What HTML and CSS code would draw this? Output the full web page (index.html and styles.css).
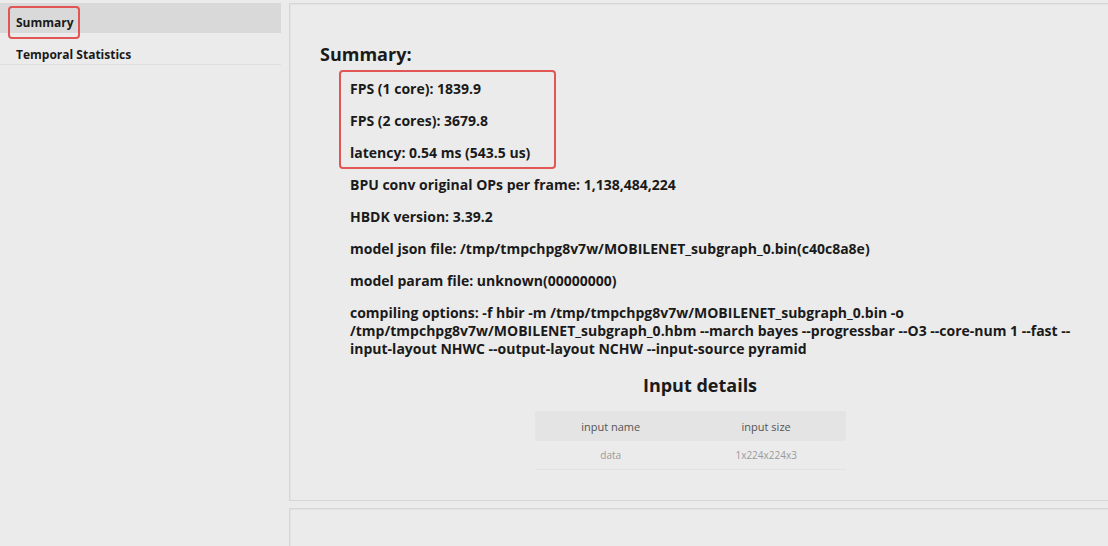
FILE: index.html
```html
<!DOCTYPE html>
<html>
<head>
<meta charset="utf-8">
<link rel="stylesheet" href="styles.css">
</head>
<body>
<div class="page">
  <nav class="sidebar">
    <div class="nav-item active"><span class="mark">Summary</span></div>
    <div class="nav-item">Temporal Statistics</div>
  </nav>
  <div class="main">
    <section class="panel">
      <h2 class="title">Summary:</h2>
      <div class="facts">
        <div class="highlight">
          <p>FPS (1 core): 1839.9</p>
          <p>FPS (2 cores): 3679.8</p>
          <p>latency: 0.54 ms (543.5 us)</p>
        </div>
        <p>BPU conv original OPs per frame: 1,138,484,224</p>
        <p>HBDK version: 3.39.2</p>
        <p>model json file: /tmp/tmpchpg8v7w/MOBILENET_subgraph_0.bin(c40c8a8e)</p>
        <p>model param file: unknown(00000000)</p>
        <p class="wrap">compiling options: -f hbir -m /tmp/tmpchpg8v7w/MOBILENET_subgraph_0.bin -o /tmp/tmpchpg8v7w/MOBILENET_subgraph_0.hbm --march bayes --progressbar --O3 --core-num 1 --fast --input-layout NHWC --output-layout NCHW --input-source pyramid</p>
      </div>
      <h2 class="subtitle">Input details</h2>
      <table class="table">
        <thead><tr><th>input name</th><th>input size</th></tr></thead>
        <tbody><tr><td>data</td><td>1x224x224x3</td></tr></tbody>
      </table>
    </section>
    <section class="panel panel-empty"></section>
  </div>
</div>
</body>
</html>
```
FILE: styles.css
```css
html, body {
  margin: 0;
  padding: 0;
  background: #ebebeb;
  overflow: hidden;
  height: 100%;
}
body {
  font-family: "Open Sans", "Noto Sans", sans-serif;
  color: #1a1a1a;
}
.page {
  display: flex;
  gap: 8px;
  padding-top: 3px;
  width: 1120px;
}
.sidebar {
  width: 281px;
  flex: none;
}
.nav-item {
  height: 30px;
  box-sizing: border-box;
  display: flex;
  align-items: flex-start;
  padding: 12px 0 0 16px;
  font-size: 12px;
  line-height: 16px;
  font-weight: 700;
  border-bottom: 1px solid #dedede;
}
.nav-item.active {
  background: #d9d9d9;
  border-bottom: none;
}
.nav-item + .nav-item {
  height: 32px;
  padding-top: 14px;
}
.mark {
  position: relative;
}
.mark::after {
  content: "";
  position: absolute;
  left: -8px;
  top: -9px;
  width: 68px;
  height: 29px;
  border: 2px solid #e25555;
  border-radius: 4px;
}
.main {
  display: flex;
  flex-direction: column;
  gap: 7px;
  width: 821px;
  flex: none;
}
.panel {
  border: 1px solid #d6d6d6;
  border-right: none;
  box-shadow: inset 1px 1px 0 #e2e2e2;
  padding: 37px 30px 30px 30px;
}
.panel-empty {
  height: 40px;
  padding: 0;
}
.title {
  margin: 0 0 3px;
  font-size: 18px;
  font-weight: 700;
  line-height: 26px;
}
.facts {
  padding-left: 30px;
}
.facts p {
  margin: 0 0 14px;
  font-size: 14px;
  font-weight: 700;
  line-height: 18px;
}
.highlight {
  margin-left: -11px;
  padding: 8px 10px 0 9px;
  width: 194px;
  border: 2px solid #e25555;
  border-radius: 4px;
  margin-bottom: 7px;
}
.highlight p:last-child {
  margin-bottom: 5px;
}
.facts p.wrap {
  margin-bottom: 0;
  width: 745px;
}
.subtitle {
  text-align: center;
  margin: 14px 0 13px;
  font-size: 18px;
  font-weight: 700;
  line-height: 26px;
}
.table {
  margin: 0 auto;
  border-collapse: collapse;
  width: 311px;
  font-size: 11px;
  transform: translateX(-10px);
}
.table th {
  background: #e4e4e4;
  font-weight: 400;
  color: #555;
  height: 30px;
  padding: 0;
}
.table td {
  color: #9a9a9a;
  height: 28px;
  padding: 0;
  text-align: center;
  border-bottom: 1px solid #e2e2e2;
  font-size: 10px;
}
```
